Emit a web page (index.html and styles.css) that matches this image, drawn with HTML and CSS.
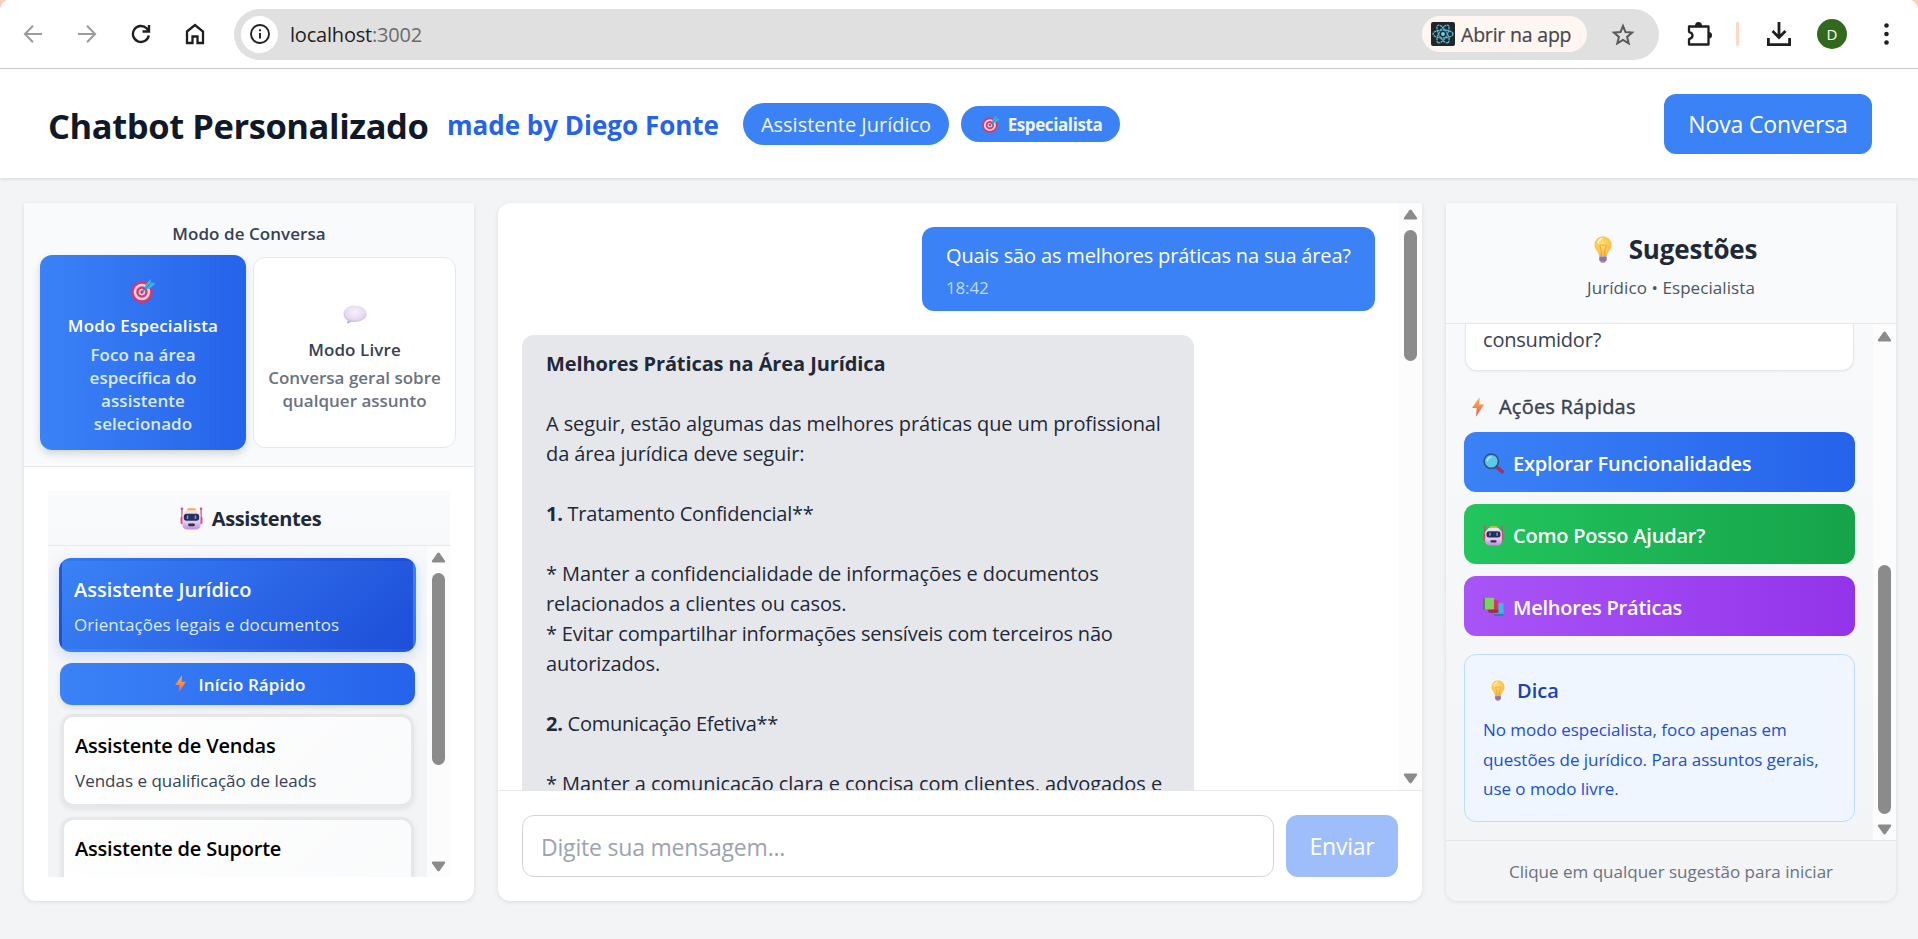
FILE: index.html
```html
<!DOCTYPE html>
<html lang="pt-BR">
<head>
<meta charset="utf-8">
<title>Chatbot Personalizado</title>
<link rel="stylesheet" href="styles.css">
</head>
<body>
<svg width="0" height="0" class="defs">
  <defs>
    <linearGradient id="gBolt" x1="0" y1="0" x2="0" y2="1"><stop offset="0" stop-color="#fbb03f"/><stop offset=".5" stop-color="#f58a4b"/><stop offset="1" stop-color="#ee4f5e"/></linearGradient>
    <radialGradient id="gBulb" cx=".45" cy=".4" r=".6"><stop offset="0" stop-color="#ffe27a"/><stop offset="1" stop-color="#fcb83a"/></radialGradient>
    <radialGradient id="gBubble" cx=".5" cy=".35" r=".7"><stop offset="0" stop-color="#f8f0fa"/><stop offset=".6" stop-color="#e6daf0"/><stop offset="1" stop-color="#b6a2cc"/></radialGradient>
    <linearGradient id="gFace" x1="0" y1="0" x2="0" y2="1"><stop offset="0" stop-color="#f0e3f3"/><stop offset=".6" stop-color="#e0cdee"/><stop offset="1" stop-color="#c08be0"/></linearGradient>
    <symbol id="target" viewBox="0 0 24 24">
      <circle cx="10.5" cy="13.5" r="10.3" fill="#d9376a"/><circle cx="10.5" cy="13.5" r="7.9" fill="#f0d3e6"/><circle cx="10.5" cy="13.5" r="5.5" fill="#d9376a"/><circle cx="10.5" cy="13.5" r="3.2" fill="#eec4dc"/><circle cx="10.5" cy="13.5" r="1.5" fill="#c53368"/>
      <path d="M10.5 13.5 17 6.5" stroke="#2b86b8" stroke-width="1.5"/><path d="M13.5 10.8 13.6 7 18.8.8 19.3 4.4 23.6 5.2 17.6 10.4z" fill="#3fb2e6"/><path d="M14 10.3 19.3 4.4" stroke="#2380b5" stroke-width=".9"/>
    </symbol>
    <symbol id="bolt" viewBox="0 0 12 20"><path d="M7.6.3 0 11h4.7L4 19.7 12 7.6H7.2z" fill="url(#gBolt)"/></symbol>
    <symbol id="bulb" viewBox="0 0 18 27">
      <path d="M9 .3A8.6 8.6 0 0 0 .5 8.9c0 3.3 1.8 5 3.2 7.1.9 1.4 1.2 2.8 1.6 4.3h7.4c.4-1.5.7-2.9 1.6-4.3 1.4-2.1 3.2-3.8 3.2-7.1A8.6 8.6 0 0 0 9 .3z" fill="url(#gBulb)"/>
      <path d="M7.3 20v-6.2L5.6 9.6q1.7-1.5 3.4 0 1.7-1.5 3.4 0l-1.7 4.2V20" fill="none" stroke="#f0982f" stroke-width=".9"/><path d="M4 7q.6-3.500 4-4.500" fill="none" stroke="#fff3b8" stroke-width="1.500" stroke-linecap="round"/>
      <path d="M5.300 20.300h7.400v3.700l-1.900 2.700H7.200l-1.900-2.700z" fill="#a58bb0"/><path d="M5.300 22h7.400M5.300 24h7.400" stroke="#735b86" stroke-width=".8"/>
    </symbol>
    <symbol id="robot" viewBox="0 0 24 24">
      <path d="M2 2v13M22 2v13" stroke="#d8417a" stroke-width="1.300"/><circle cx="2" cy="1.800" r="1.300" fill="#e0457c"/><circle cx="22" cy="1.800" r="1.300" fill="#e0457c"/>
      <rect x=".6" y="10" width="4" height="8" rx="1.800" fill="#e83f7d"/><rect x="19.400" y="10" width="4" height="8" rx="1.800" fill="#e83f7d"/>
      <rect x="7.500" y="1.300" width="9" height="4" rx="1.500" fill="#f5b13b"/><path d="M6.500 3.500h11l4 4.500v10q0 5.500-5.500 5.500H8q-5.500 0-5.500-5.500V8z" fill="url(#gFace)"/>
      <rect x="4" y="7" width="16" height="7.400" rx="2.800" fill="#2d2d55"/><rect x="7" y="8.600" width="1.800" height="4" rx=".9" fill="#3ba6ee"/><rect x="15.200" y="8.600" width="1.800" height="4" rx=".9" fill="#3ba6ee"/><rect x="8.500" y="17.300" width="7" height="2.700" rx="1.200" fill="#332b4d"/>
    </symbol>
    <symbol id="balloon" viewBox="0 0 24 19"><path d="M12 .4C5.600.400.500 3.900.500 8.800c0 2.800 1.600 5 4 6.500L4 18.700l5.200-2q1.300.300 2.800.300c6.400 0 11.500-3.500 11.500-8.200S18.400.400 12 .400z" fill="url(#gBubble)"/></symbol>
    <symbol id="lens" viewBox="0 0 22 22"><path d="m14 14.500 6 5" stroke="#93386d" stroke-width="4" stroke-linecap="round"/><circle cx="8.700" cy="8.700" r="7.500" fill="#5cc8ea" stroke="#34508c" stroke-width="1.800"/><path d="M4.500 8q.5-3.500 4-4" fill="none" stroke="#b8ecf8" stroke-width="1.400" stroke-linecap="round"/></symbol>
    <symbol id="books" viewBox="0 0 22 20"><path d="M12 6h9.500v13.500H12z" fill="#3fb6ea"/><path d="M11 17h10.500v2.500H12z" fill="#2a7fb4"/><path d="M8 3h8v13H8z" fill="#de3058"/><path d="M5 13h11v3H6z" fill="#a32a52"/><path d="M0 .800 2 .300h9.500v12H2L0 13.300z" fill="#7ed35c"/><path d="M0 .800 2 .300v12L0 13.500z" fill="#3c8b4b"/></symbol>
    <symbol id="up" viewBox="0 0 15 11"><path d="M6.300 1.200q1.200-1.500 2.400 0l5.300 7.500q.7 1.600-1 1.800H2q-1.700-.2-1-1.800z" fill="#8b8b8b"/></symbol>
    <symbol id="down" viewBox="0 0 15 11"><path d="M6.300 9.800q1.200 1.500 2.400 0L14 2.300Q14.700.700 13 .500H2Q.3.700 1 2.300z" fill="#8b8b8b"/></symbol>
  </defs>
</svg>

<div class="chrome">
  <div class="corner corner-left"></div><div class="corner corner-right"></div>
  <svg class="c-back" width="20" height="20" viewBox="0 0 20 20" fill="none" stroke="#9b9b9b" stroke-width="2"><path d="M19 10H2.500M10 1.800 1.900 10l8.100 8.200"/></svg>
  <svg class="c-fwd" width="20" height="20" viewBox="0 0 20 20" fill="none" stroke="#9b9b9b" stroke-width="2"><path d="M1 10h16.500M10 1.800l8.100 8.200-8.100 8.200"/></svg>
  <svg class="c-reload" width="20" height="20" viewBox="0 0 20 20" fill="none" stroke="#1f1f1f" stroke-width="2.400"><path d="M17.800 11.500A8 8 0 1 1 15.800 4.500L17.500 6.500M18 1v6.500h-6.500"/></svg>
  <svg class="c-home" width="20" height="22" viewBox="0 0 20 22" fill="none" stroke="#1f1f1f" stroke-width="2.300"><path d="M2 8.500 10 2l8 6.500V20h-5.500v-6.500h-5V20H2z"/></svg>
  <div class="address">
    <div class="site-info"><svg width="22" height="22" viewBox="0 0 22 22"><circle cx="11" cy="11" r="9" fill="none" stroke="#1f1f1f" stroke-width="1.900"/><path d="M11 10v5.500M11 6.300v2" stroke="#1f1f1f" stroke-width="1.900"/></svg></div>
    <div class="url">localhost<span class="port">:3002</span></div>
    <div class="open-app">
      <svg width="24" height="24" viewBox="0 0 24 24"><rect width="24" height="24" rx="2" fill="#20272b"/><g fill="none" stroke="#5bb6cf" stroke-width="1.300" stroke-dasharray="2.500 .6"><ellipse cx="12" cy="12" rx="10" ry="4"/><ellipse cx="12" cy="12" rx="10" ry="4" transform="rotate(60 12 12)"/><ellipse cx="12" cy="12" rx="10" ry="4" transform="rotate(120 12 12)"/></g><circle cx="12" cy="12" r="1.900" fill="#61dafb"/></svg>
      <span>Abrir na app</span>
    </div>
    <svg class="c-star" width="24" height="23" viewBox="0 0 24 23" fill="none" stroke="#5a5a5a" stroke-width="2"><path d="m12 3 2.500 6.100 6.600.5-5 4.300 1.600 6.400L12 16.800l-5.700 3.500 1.600-6.400-5-4.300 6.600-.5z"/></svg>
  </div>
  <svg class="c-puzzle" width="26" height="26" viewBox="0 0 26 26"><path d="M3 5.500h19.500v18H3v-5.300q3.500-1 3.500-3.700T3 10.800z" fill="none" stroke="#1f1f1f" stroke-width="2.300" stroke-linejoin="round"/><path d="M9 5q0-4 3.500-4T16 5zM22.500 11q3.500 0 3.500 3.200t-3.500 3.200z" fill="#1f1f1f"/></svg>
  <div class="c-sep"></div>
  <svg class="c-down" width="24" height="24" viewBox="0 0 24 24" fill="none" stroke="#1f1f1f" stroke-width="2.800"><path d="M12 0v15M5.500 9l6.500 6.500L18.500 9M1.400 16v6.600h21.200V16"/></svg>
  <div class="avatar">D</div>
  <svg class="c-menu" width="5" height="22" viewBox="0 0 5 22" fill="#1f1f1f"><circle cx="2.500" cy="2.500" r="2.300"/><circle cx="2.500" cy="11" r="2.300"/><circle cx="2.500" cy="19.500" r="2.300"/></svg>
</div>

<header class="header">
  <h1 class="title">Chatbot Personalizado</h1>
  <span class="author">made by Diego Fonte</span>
  <span class="pill pill-assistant">Assistente Jurídico</span>
  <span class="pill pill-mode"><svg width="18" height="18"><use href="#target"/></svg>Especialista</span>
  <button class="new-chat">Nova Conversa</button>
</header>

<main class="main">
  <aside class="panel side">
    <section class="modes">
      <h3 class="modes-title">Modo de Conversa</h3>
      <div class="mode-row">
        <div class="mode mode-on">
          <svg width="25" height="25"><use href="#target"/></svg>
          <div class="mode-name">Modo Especialista</div>
          <div class="mode-desc">Foco na área<br>específica do<br>assistente<br>selecionado</div>
        </div>
        <div class="mode mode-off">
          <svg width="24" height="19"><use href="#balloon"/></svg>
          <div class="mode-name">Modo Livre</div>
          <div class="mode-desc">Conversa geral sobre<br>qualquer assunto</div>
        </div>
      </div>
    </section>
    <section class="assistants">
      <div class="assistants-head"><svg width="23" height="23"><use href="#robot"/></svg><span>Assistentes</span></div>
      <div class="assistants-body">
        <div class="assistants-list">
          <div class="card card-on"><div class="card-name">Assistente Jurídico</div><div class="card-desc">Orientações legais e documentos</div></div>
          <div class="quick"><svg width="11" height="18"><use href="#bolt"/></svg><span>Início Rápido</span></div>
          <div class="card card-sales"><div class="card-name">Assistente de Vendas</div><div class="card-desc">Vendas e qualificação de leads</div></div>
          <div class="card"><div class="card-name">Assistente de Suporte</div><div class="card-desc">Atendimento e suporte técnico</div></div>
        </div>
        <div class="scroll"><svg width="15" height="11"><use href="#up"/></svg><div class="thumb thumb-left"></div><svg class="arrow-down" width="15" height="11"><use href="#down"/></svg></div>
      </div>
    </section>
  </aside>

  <section class="panel chat">
    <div class="chat-body">
      <div class="messages">
        <div class="msg msg-user"><div class="question">Quais são as melhores práticas na sua área?</div><div class="time">18:42</div></div>
        <div class="msg msg-bot"><strong>Melhores Práticas na Área Jurídica</strong><br><br>A seguir, estão algumas das melhores práticas que um profissional<br>da área jurídica deve seguir:<br><br><span class="topic"><strong>1.</strong> Tratamento Confidencial**</span><br><br>* Manter a confidencialidade de informações e documentos<br>relacionados a clientes ou casos.<br><span class="snug">* Evitar compartilhar informações sensíveis com terceiros não</span><br>autorizados.<br><br><span class="topic"><strong>2.</strong> Comunicação Efetiva**</span><br><br><span class="loose">* Manter a comunicação clara e concisa com clientes, advogados e</span></div>
      </div>
      <div class="scroll scroll-chat"><svg width="15" height="11"><use href="#up"/></svg><div class="thumb thumb-chat"></div><svg class="arrow-down" width="15" height="11"><use href="#down"/></svg></div>
    </div>
    <div class="composer">
      <div class="field">Digite sua mensagem...</div>
      <button class="send">Enviar</button>
    </div>
  </section>

  <aside class="panel tips">
    <div class="tips-head">
      <h2 class="tips-title"><svg width="18" height="27"><use href="#bulb"/></svg><span>Sugestões</span></h2>
      <div class="tips-sub">Jurídico • Especialista</div>
    </div>
    <div class="tips-body">
      <div class="tips-list">
        <div class="suggestion">consumidor?</div>
        <div class="actions-title"><svg width="12" height="20"><use href="#bolt"/></svg><span>Ações Rápidas</span></div>
        <div class="action action-blue"><svg width="21" height="21"><use href="#lens"/></svg><span>Explorar Funcionalidades</span></div>
        <div class="action action-green"><svg width="21" height="21"><use href="#robot"/></svg><span>Como Posso Ajudar?</span></div>
        <div class="action action-purple"><svg width="21" height="20"><use href="#books"/></svg><span>Melhores Práticas</span></div>
        <div class="hint">
          <div class="hint-title"><svg width="14" height="21"><use href="#bulb"/></svg><span>Dica</span></div>
          <div class="hint-text">No modo especialista, foco apenas em<br>questões de jurídico. Para assuntos gerais,<br>use o modo livre.</div>
        </div>
      </div>
      <div class="scroll scroll-tips"><svg width="15" height="11"><use href="#up"/></svg><div class="thumb thumb-tips"></div><svg class="arrow-down" width="15" height="11"><use href="#down"/></svg></div>
    </div>
    <div class="tips-foot">Clique em qualquer sugestão para iniciar</div>
  </aside>
</main>
</body>
</html>
```

FILE: styles.css
```css
* { box-sizing: border-box; }
body { margin: 0; width: 1918px; height: 939px; overflow: hidden; background: #f3f4f6; font-family: "Open Sans", "Noto Sans", sans-serif; color: #1f2937; display: flex; flex-direction: column; }
svg { display: block; flex: none; }
.defs { position: absolute; }
h1, h2, h3 { margin: 0; }
button { font-family: inherit; border: 0; padding: 0; color: #fff; }

/* Browser toolbar */
.chrome { position: relative; height: 69px; flex: none; background: #fff; border-bottom: 1px solid #c9c9c9; display: flex; align-items: center; padding-left: 23px; }
.corner { position: absolute; top: 0; width: 8px; height: 11px; }
.corner-left { left: 0; background: radial-gradient(ellipse 8px 11px at 100% 100%, transparent 98%, #fbd0bb 100%); }
.corner-right { right: 0; background: radial-gradient(ellipse 8px 11px at 0 100%, transparent 98%, #fbd0bb 100%); }
.c-fwd { margin-left: 34px; }
.c-reload { margin-left: 34px; }
.c-home { margin-left: 34px; }
.address { margin-left: 29px; width: 1425px; height: 51px; border-radius: 26px; background: #e0e0e0; display: flex; align-items: center; padding-left: 7px; }
.site-info { width: 37px; height: 37px; border-radius: 50%; background: #fff; display: flex; align-items: center; justify-content: center; }
.url { margin-left: 12px; font-size: 20px; letter-spacing: -.2px; color: #1f1f1f; width: 1132px; }
.port { color: #6b6b6b; }
.open-app { width: 165px; height: 36px; border-radius: 18px; background: #fff6f2; color: #474747; font-size: 19.500px; letter-spacing: -.2px; display: flex; align-items: center; gap: 6px; padding-left: 9px; white-space: nowrap; -webkit-text-stroke: .2px #474747; }
.c-star { margin-left: 24px; }
.c-puzzle { margin-left: 27px; }
.c-sep { margin-left: 24px; width: 3px; height: 24px; background: #fbd8c8; border-radius: 1px; }
.c-down { margin-left: 28px; }
.avatar { margin-left: 26px; width: 30px; height: 30px; border-radius: 50%; background: #33691e; color: #fff; font-size: 15px; line-height: 30px; text-align: center; }
.c-menu { margin-left: 37px; }

/* Page header */
.header { height: 109px; flex: none; background: #fff; box-shadow: 0 1px 4px rgba(0,0,0,.12); display: flex; align-items: center; padding: 0 46px 0 48px; white-space: nowrap; }
.title { width: 399px; font-size: 34.500px; font-weight: 700; color: #111827; letter-spacing: -.42px; padding-top: 3px; }
.author { width: 296px; font-size: 26px; font-weight: 700; color: #2563eb; letter-spacing: 0; padding-top: 3px; }
.pill { background: #3b82f6; color: #eff6ff; display: flex; align-items: center; justify-content: center; }
.pill-assistant { width: 206px; height: 42px; border-radius: 21px; font-size: 20px; padding-top: 2px; }
.pill-mode { margin-left: 12px; width: 159px; height: 36px; border-radius: 18px; font-size: 17px; font-weight: 700; gap: 8px; letter-spacing: -.4px; padding: 1px 0 0 3px; }
.new-chat { margin-left: auto; width: 208px; height: 60px; border-radius: 12px; background: #3b82f6; font-size: 23px; letter-spacing: -.15px; padding-top: 1px; }

/* Three columns */
.main { display: flex; gap: 24px; padding: 25px 22px 38px 24px; height: 761px; }
.panel { height: 698px; border-radius: 12px; background: #fff; box-shadow: 0 1px 4px rgba(0,0,0,.1); overflow: hidden; display: flex; flex-direction: column; }
.side { width: 450px; border-radius: 0 0 12px 12px; }
.chat { width: 924px; border-radius: 12px 0 12px 12px; }
.tips { width: 450px; border-radius: 0 0 12px 12px; background: linear-gradient(#f9fafb, #f3f4f6); }

.modes { height: 264px; background: #f9fafb; border-bottom: 1px solid #e5e7eb; padding: 19px 16px 0; }
.modes-title { font-size: 17px; line-height: 24px; font-weight: 600; color: #374151; text-align: center; letter-spacing: .05px; }
.mode-row { display: flex; align-items: center; gap: 7px; margin-top: 9px; }
.mode { border-radius: 12px; display: flex; flex-direction: column; align-items: center; text-align: center; font-size: 17px; line-height: 23px; font-weight: 600; white-space: nowrap; }
.mode-on { width: 206px; height: 195px; background: linear-gradient(90deg, #3b82f6, #2563eb); color: #fff; box-shadow: 0 4px 8px rgba(0,0,0,.15); padding-top: 23px; }
.mode-on .mode-name { margin-top: 11px; letter-spacing: .2px; }
.mode-on .mode-desc { margin-top: 6px; color: #dbeafe; letter-spacing: .05px; }
.mode-off { width: 203px; height: 191px; background: #fff; border: 1px solid #e5e7eb; padding-top: 47px; color: #374151; }
.mode-off .mode-name { margin-top: 14px; letter-spacing: .1px; }
.mode-off .mode-desc { margin-top: 5px; color: #6b7280; }

.assistants { margin: 24px 24px 24px; height: 386px; background: linear-gradient(#f9fafb, #f3f4f6 70%); display: flex; flex-direction: column; }
.assistants-head { height: 55px; border-bottom: 1px solid #e5e7eb; display: flex; align-items: center; justify-content: center; gap: 9px; font-size: 20px; font-weight: 700; letter-spacing: -.4px; padding: 1px 0 0 3px; }
.assistants-body { height: 331px; display: flex; }
.assistants-list { width: 379px; height: 331px; overflow: hidden; padding: 12px 11px; }
.card { margin: 0 2px; height: 93px; border: 3px solid #e5e7eb; border-radius: 12px; background: linear-gradient(135deg, #fff, #f9fafb) padding-box; box-shadow: 0 2px 5px rgba(0,0,0,.08); padding: 12px 11px 0; color: #000; white-space: nowrap; }
.card-name { font-size: 20px; line-height: 33px; font-weight: 600; letter-spacing: -.2px; }
.card-desc { margin-top: 2px; font-size: 17px; line-height: 33px; color: #374151; }
.card-on { margin: 0; height: 94px; border-color: transparent; background: linear-gradient(135deg, #3b82f6, #1d4ed8); box-shadow: 0 4px 14px rgba(59,130,246,.25); padding: 12px 12px 0; color: #fff; }
.card-on .card-name { letter-spacing: -.02px; }
.card-on .card-desc { color: #dbeafe; letter-spacing: .07px; }
.card-sales { margin-bottom: 10px; }
.quick { margin: 11px 1px 9px; height: 42px; border-radius: 12px; background: linear-gradient(90deg, #3b82f6, #2563eb); color: #fff; font-size: 17px; font-weight: 600; display: flex; align-items: center; justify-content: center; gap: 12px; box-shadow: 0 3px 6px rgba(0,0,0,.1); letter-spacing: .1px; padding-left: 6px; }

.scroll { width: 23px; background: #fcfcfc; padding: 6px 0 5px; display: flex; flex-direction: column; align-items: center; }
.thumb { width: 13px; border-radius: 7px; background: #8b8b8b; }
.arrow-down { margin-top: auto; }
.thumb-left { height: 192px; margin-top: 10px; }
.scroll-chat { padding-bottom: 6px; }
.thumb-chat { height: 131px; margin-top: 10px; }
.thumb-tips { height: 249px; margin-top: 223px; }
.scroll-tips { padding-top: 7px; }

/* Conversation */
.chat-body { height: 587px; display: flex; }
.messages { width: 901px; height: 587px; overflow: hidden; padding: 24px; display: flex; flex-direction: column; gap: 24px; font-size: 20px; line-height: 30px; }
.msg { flex: none; border-radius: 12px; padding: 12px 24px; white-space: nowrap; }
.msg-user { align-self: flex-end; width: 453px; height: 84px; background: #3b82f6; color: #fff; letter-spacing: -.16px; padding-top: 14px; }
.time { margin-top: 5px; font-size: 17px; line-height: 24px; color: #bfdbfe; }
.msg-bot { width: 672px; height: 600px; background: #e5e7eb; padding-top: 14px; letter-spacing: -.1px; }
.topic { letter-spacing: -.25px; }
.snug { letter-spacing: -.18px; }
.loose { letter-spacing: -.05px; }
.composer { height: 111px; border-top: 1px solid #e5e7eb; padding: 24px; display: flex; gap: 12px; }
.field { width: 752px; height: 62px; border: 1px solid #d1d5db; border-radius: 12px; padding-left: 18px; font-size: 23px; line-height: 62px; color: #9ca3af; letter-spacing: -.2px; }
.send { width: 112px; height: 62px; border-radius: 12px; background: #9dbefa; font-size: 23px; letter-spacing: -.2px; }

/* Suggestions */
.tips-head { height: 121px; border-bottom: 1px solid #e5e7eb; padding-top: 28px; text-align: center; background: #f9fafb; }
.tips-title { display: flex; align-items: center; justify-content: center; gap: 17px; font-size: 26px; line-height: 36px; font-weight: 700; letter-spacing: -.15px; padding-left: 9px; }
.tips-sub { margin-top: 7px; font-size: 17px; line-height: 27px; color: #4b5563; letter-spacing: .08px; }
.tips-body { height: 516px; display: flex; }
.tips-list { width: 427px; padding: 0 18px; white-space: nowrap; }
.suggestion { height: 47px; margin: 0 1px; border: 1px solid #e5e7eb; border-top: 0; border-radius: 0 0 12px 12px; background: #fff; box-shadow: 0 1px 2px rgba(0,0,0,.05); padding: 1px 0 0 17px; font-size: 20px; line-height: 30px; color: #374151; letter-spacing: -.2px; }
.actions-title { height: 61px; padding: 11px 0 1px 8px; display: flex; align-items: center; gap: 15px; font-size: 20px; color: #374151; letter-spacing: .22px; -webkit-text-stroke: .4px #374151; }
.action { height: 60px; margin-bottom: 12px; border-radius: 12px; padding: 2px 0 0 19px; display: flex; align-items: center; gap: 9px; color: #fff; font-size: 20px; font-weight: 600; letter-spacing: -.22px; }
.action-blue { background: linear-gradient(90deg, #3b82f6, #2563eb); }
.action-green { background: linear-gradient(90deg, #22c55e, #16a34a); }
.action-purple { background: linear-gradient(90deg, #a855f7, #9333ea); }
.hint { margin-top: 18px; height: 168px; border: 1px solid #bfdbfe; border-radius: 12px; background: #eff6ff; padding: 17px 18px; }
.hint-title { height: 36px; padding-left: 8px; display: flex; align-items: center; gap: 12px; font-size: 20px; font-weight: 600; color: #1e40af; }
.hint-text { margin-top: 7px; font-size: 17px; line-height: 29.500px; color: #1d4ed8; letter-spacing: -.03px; }
.tips-foot { height: 61px; border-top: 1px solid #e5e7eb; background: #f3f4f6; font-size: 17px; line-height: 61px; text-align: center; color: #6b7280; }
```
